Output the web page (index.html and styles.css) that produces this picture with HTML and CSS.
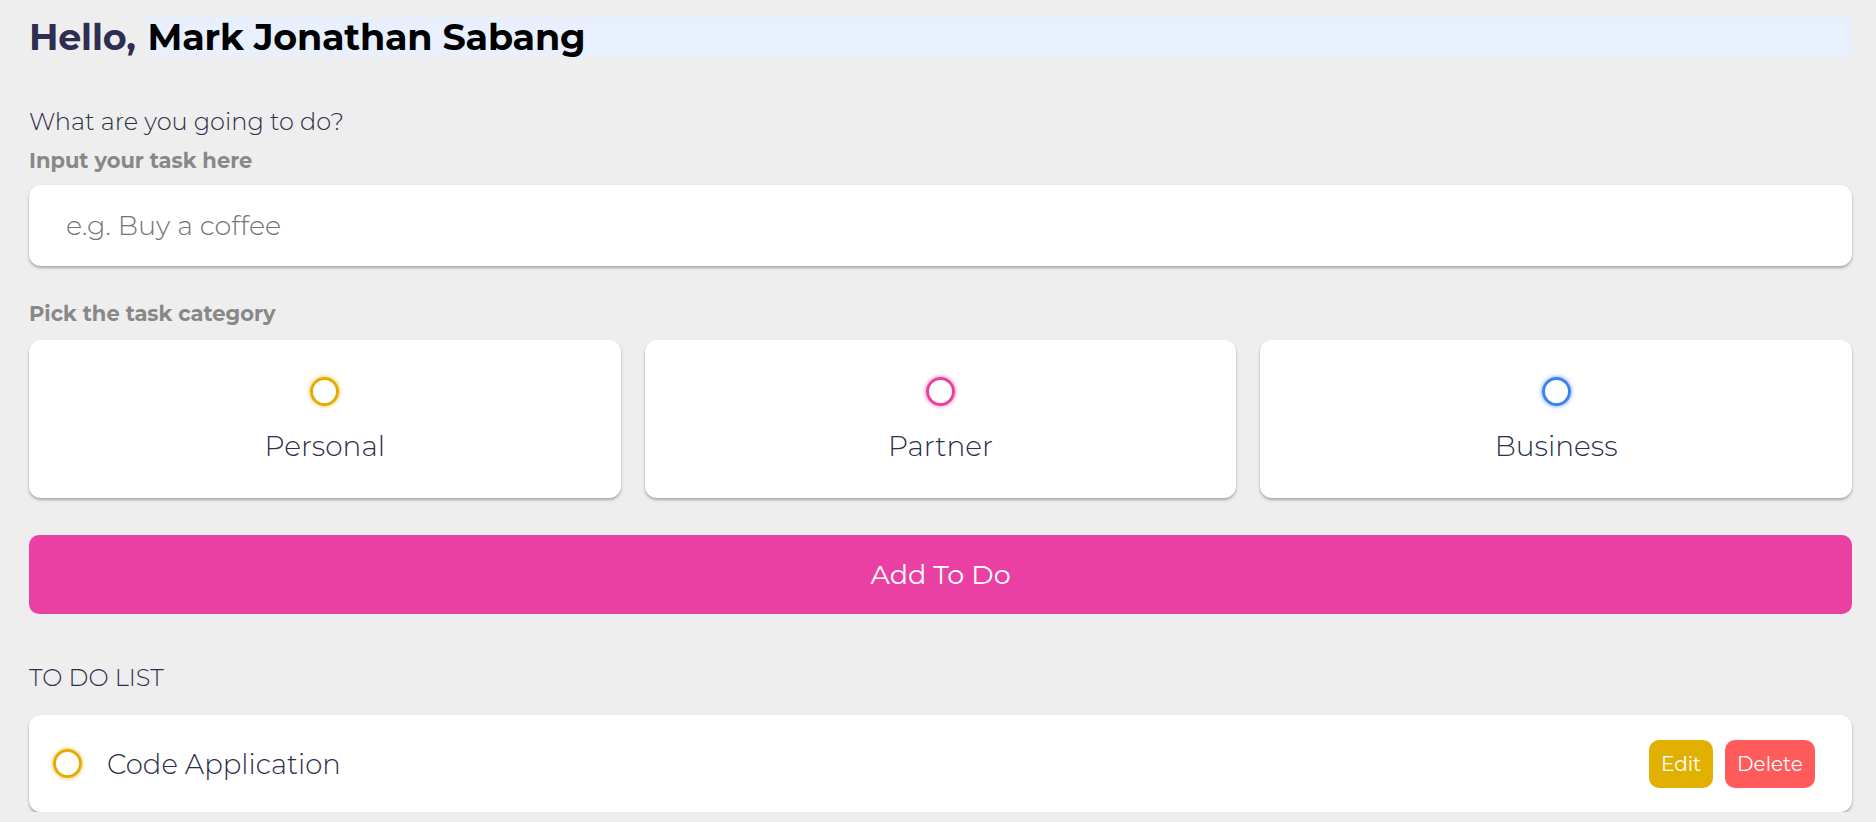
FILE: index.html
```html
<!DOCTYPE html>
<html lang="en">
<head>
<meta charset="utf-8">
<title>To Do</title>
<link rel="stylesheet" href="styles.css">
</head>
<body>
<main class="app">
  <h1 class="greeting">
    <span class="hello">Hello,</span>
    <span class="name">Mark Jonathan Sabang</span>
  </h1>

  <section class="create">
    <p class="question">What are you going to do?</p>
    <p class="label">Input your task here</p>
    <div class="task-input"><span class="placeholder">e.g. Buy a coffee</span></div>

    <p class="label label-cat">Pick the task category</p>
    <div class="categories">
      <div class="category">
        <span class="bubble bubble-personal"></span>
        <span class="cat-name">Personal</span>
      </div>
      <div class="category">
        <span class="bubble bubble-partner"></span>
        <span class="cat-name">Partner</span>
      </div>
      <div class="category">
        <span class="bubble bubble-business"></span>
        <span class="cat-name">Business</span>
      </div>
    </div>

    <button class="add-btn">Add To Do</button>
  </section>

  <section class="list">
    <h3 class="list-title">TO DO LIST</h3>
    <div class="todo-item">
      <span class="bubble bubble-personal"></span>
      <span class="todo-text">Code Application</span>
      <div class="actions">
        <button class="btn btn-edit">Edit</button>
        <button class="btn btn-delete">Delete</button>
      </div>
    </div>
  </section>
</main>
</body>
</html>
```

FILE: styles.css
```css
* { box-sizing: border-box; }

html, body {
  margin: 0;
  padding: 0;
  background: #eeeeee;
}

body {
  font-family: "Montserrat", "Inter", "Noto Sans", sans-serif;
  color: #313154;
  overflow: hidden;
}

.app {
  padding: 17px 24px 0 29px;
}

.greeting {
  display: flex;
  align-items: center;
  height: 40px;
  margin: 0;
  font-size: 36.5px;
  font-weight: 700;
  letter-spacing: -0.2px;
}

.hello {
  color: #2e2e52;
  padding-right: 10px;
}

.name {
  flex: 1;
  height: 40px;
  line-height: 40px;
  padding-left: 2px;
  background: #e8f0fe;
  color: #000000;
}

.question {
  margin: 51px 0 0;
  font-size: 24px;
  font-weight: 300;
  line-height: 28px;
  color: #2e2e4a;
}

.label {
  margin: 13px 0 0;
  font-size: 21px;
  font-weight: 700;
  line-height: 24px;
  color: #888888;
}

.task-input {
  margin-top: 12px;
  height: 81px;
  background: #ffffff;
  border-radius: 12px;
  box-shadow: 0 2px 3px rgba(0, 0, 0, 0.3);
  display: flex;
  align-items: center;
  padding-left: 37px;
}

.placeholder {
  font-size: 27px;
  font-weight: 300;
  color: #757575;
}

.label-cat {
  margin-top: 36px;
}

.categories {
  margin-top: 14px;
  display: grid;
  grid-template-columns: repeat(3, 1fr);
  gap: 24px;
}

.category {
  height: 158px;
  background: #ffffff;
  border-radius: 12px;
  box-shadow: 0 2px 3px rgba(0, 0, 0, 0.3);
  display: flex;
  flex-direction: column;
  align-items: center;
  padding-top: 37px;
}

.bubble {
  display: block;
  flex: none;
  width: 29px;
  height: 29px;
  border-radius: 50%;
  border: 3px solid;
}

.bubble-personal {
  border-color: #e2ac00;
  box-shadow: 0 0 4px rgba(226, 172, 0, 0.8);
}

.bubble-partner {
  border-color: #ea3f9f;
  box-shadow: 0 0 4px rgba(234, 63, 159, 0.8);
}

.bubble-business {
  border-color: #3a82f0;
  box-shadow: 0 0 4px rgba(58, 130, 240, 0.8);
}

.cat-name {
  margin-top: 23px;
  font-size: 28px;
  line-height: 34px;
  font-weight: 300;
  color: #2e2e4a;
}

.add-btn {
  display: block;
  width: 100%;
  margin-top: 37px;
  height: 79px;
  border: none;
  border-radius: 10px;
  background: #ea40a4;
  color: #ffffff;
  font-family: inherit;
  font-size: 27px;
  font-weight: 400;
}

.list-title {
  margin: 50px 0 0;
  font-size: 24px;
  font-weight: 300;
  line-height: 28px;
  color: #2e2e4a;
}

.todo-item {
  margin-top: 23px;
  height: 97px;
  background: #ffffff;
  border-radius: 12px;
  box-shadow: 0 2px 3px rgba(0, 0, 0, 0.3);
  display: flex;
  align-items: center;
  padding: 0 37px 0 24px;
}

.todo-text {
  margin-left: 25px;
  font-size: 27.5px;
  font-weight: 300;
  color: #2e2e4a;
}

.actions {
  margin-left: auto;
  display: flex;
  gap: 12px;
}

.btn {
  height: 48px;
  border: none;
  border-radius: 10px;
  color: #ffffff;
  font-family: inherit;
  font-size: 20px;
  font-weight: 400;
  padding: 0;
}

.btn-edit {
  background: #e2b000;
  width: 64px;
}

.btn-delete {
  background: #ff5b5b;
  width: 90px;
}
```
